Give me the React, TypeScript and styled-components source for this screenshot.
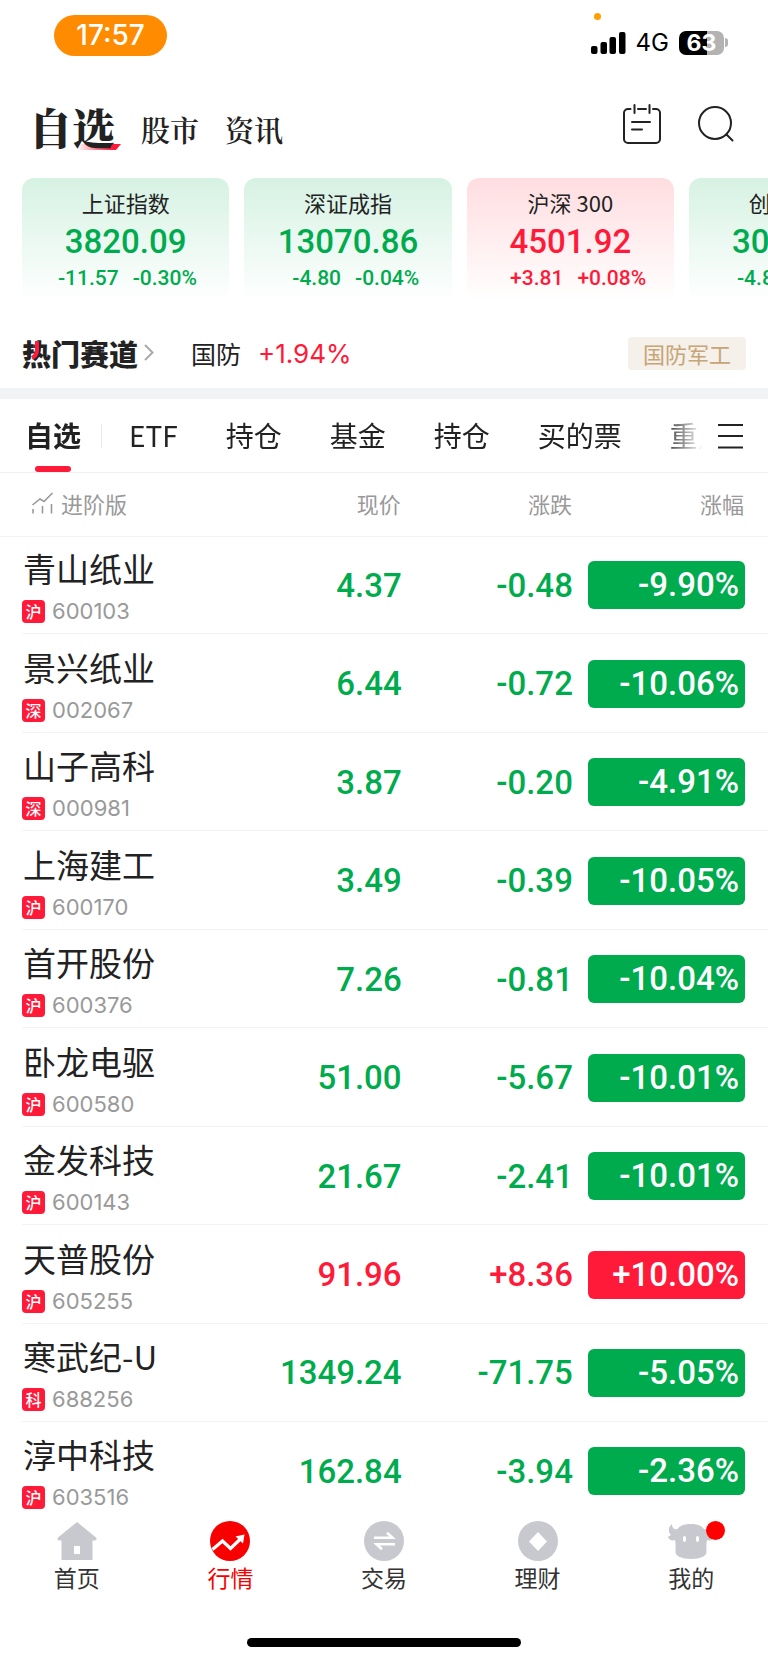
import React from "react";
import styled, { createGlobalStyle, css } from "styled-components";

const RED = "#ff1a39";
const GREEN = "#00ab4e";
const INK = "#222222";
const GREY = "#999999";
const CJK = `"Noto Sans CJK SC", sans-serif`;
const NUM = `Roboto, "Noto Sans CJK SC", sans-serif`;
const UI = `Inter, "Noto Sans CJK SC", sans-serif`;

const GlobalStyle = createGlobalStyle`
  *, *::before, *::after { box-sizing: border-box; }
  body { margin: 0; background: #fff; color: ${INK}; font-family: ${CJK}; }
  button { margin: 0; padding: 0; border: 0; background: none; color: inherit; font: inherit; cursor: pointer; }
  a { color: inherit; text-decoration: none; }
  svg { display: block; flex: none; }
  h1, h2, p { margin: 0; }
`;

type Tone = "up" | "down";
const toneColor = (t: Tone) => (t === "up" ? RED : GREEN);

const Page = styled.div`
  display: flex;
  flex-direction: column;
  width: 100%;
  min-height: 100vh;
  overflow: hidden;
`;

/* ---------- status bar ---------- */

const StatusBar = styled.div`
  display: flex;
  align-items: center;
  justify-content: space-between;
  padding: 15px 40px 0 54px;
  font-family: ${UI};
`;

const TimePill = styled.time`
  width: 113px;
  border-radius: 21px;
  background: #ff8c00;
  color: #fff;
  font-size: 28px;
  font-weight: 500;
  line-height: 41px;
  text-align: center;
`;

const StatusRight = styled.div`
  position: relative;
  display: flex;
  align-items: center;
  gap: 10px;
  padding-top: 14px;
  line-height: 24px;
`;

const PrivacyDot = styled.span`
  position: absolute;
  top: -4px;
  left: 3px;
  width: 7px;
  height: 7px;
  border-radius: 50%;
  background: #ffa000;
`;

const Network = styled.span`
  color: #000;
  font-size: 24px;
`;

const Battery = styled.span`
  display: flex;
  align-items: center;
  gap: 1px;
`;

const BatteryCell = styled.span`
  width: 45px;
  height: 24px;
  border-radius: 7px;
  background: linear-gradient(90deg, #000 63%, #b3b3b3 63%);
  color: #fff;
  font-size: 23px;
  font-weight: 700;
  text-align: center;
`;

const BatteryNub = styled.span`
  width: 3px;
  height: 9px;
  border-radius: 0 3px 3px 0;
  background: #b3b3b3;
`;

/* ---------- page header ---------- */

const Header = styled.header`
  display: flex;
  align-items: center;
  justify-content: space-between;
  height: 122px;
  padding: 26px 34px 12px 29px;
`;

const Sections = styled.nav`
  display: flex;
  align-items: flex-end;
  gap: 26px;
  margin-top: 6px;
  font-family: "Noto Serif CJK SC", "Noto Serif SC", "Noto Sans CJK SC", serif;
`;

const SectionLink = styled.a<{ $active?: boolean }>`
  position: relative;
  font-size: 29px;
  font-weight: 600;
  line-height: 42px;
  ${(p) =>
    p.$active &&
    css`
      font-size: 43px;
      font-weight: 900;
      line-height: 48px;
    `}
`;

const Swoosh = styled.svg`
  position: absolute;
  right: -6px;
  bottom: 1px;
  z-index: -1;
`;

const HeaderActions = styled.div`
  display: flex;
  align-items: center;
  gap: 37px;
`;

/* ---------- index cards ---------- */

const Cards = styled.section`
  display: flex;
  gap: 15px;
  padding-left: 22px;
  overflow: hidden;
`;

const Card = styled.article<{ $tone: Tone }>`
  flex: 0 0 27vw;
  height: 124px;
  padding-top: 10px;
  border-radius: 12px;
  background: linear-gradient(
    180deg,
    ${(p) => (p.$tone === "up" ? "#ffdde0" : "#d6f2e3")} 0%,
    #ffffff 100%
  );
  color: ${(p) => toneColor(p.$tone)};
  font-family: ${NUM};
  text-align: center;
`;

const CardTitle = styled.h2`
  color: ${INK};
  font-family: ${CJK};
  font-size: 22px;
  font-weight: 400;
  line-height: 28px;
`;

const CardValue = styled.p`
  margin-top: 5px;
  font-size: 33px;
  font-weight: 500;
  line-height: 42px;
`;

const CardChange = styled.p`
  display: grid;
  grid-template-columns: 1fr 1fr;
  gap: 14px;
  font-size: 21px;
  font-weight: 500;
  line-height: 30px;
  text-align: left;

  span:first-child { text-align: right; }
`;

/* ---------- hot sector strip ---------- */

const HotStrip = styled.section`
  display: flex;
  align-items: center;
  height: 86px;
  padding: 17px 22px 0;
`;

const HotTitle = styled.a`
  position: relative;
  display: flex;
  align-items: center;
  gap: 6px;
  padding-bottom: 2px;
  font-size: 29px;
  font-weight: 900;
  line-height: 34px;
`;

const HotStroke = styled.svg`
  position: absolute;
  top: 4px;
  left: 8px;
`;

const HotName = styled.span`
  margin-left: 37px;
  padding-bottom: 2px;
  font-size: 25px;
  line-height: 34px;
`;

const HotChange = styled.span`
  margin-left: 17px;
  color: ${RED};
  font-family: ${UI};
  font-size: 26px;
`;

const SectorTag = styled.button`
  && {
    margin-left: auto;
    padding: 0 15px;
    border-radius: 4px;
    background: #f5f0e9;
    color: #c6a576;
    font-size: 22px;
    line-height: 33px;
  }
`;

const Band = styled.div`
  height: 11px;
  background: #f2f3f5;
`;

/* ---------- group tabs ---------- */

const GroupBar = styled.div`
  display: flex;
  align-items: center;
  height: 74px;
  padding: 0 24px 0 25px;
  border-bottom: 1px solid #eeeff0;
`;

const GroupTabs = styled.nav`
  display: flex;
  flex: 1;
  gap: 48px;
  min-width: 0;
  overflow: hidden;
  mask-image: linear-gradient(90deg, #000 94%, transparent 100%);
`;

const GroupTab = styled.button<{ $active?: boolean }>`
  && {
    position: relative;
    flex: none;
    font-size: 28px;
    font-weight: ${(p) => (p.$active ? 700 : 400)};
    line-height: 73px;
    white-space: nowrap;
  }
  ${(p) =>
    p.$active &&
    css`
      &::before {
        content: "";
        position: absolute;
        right: -21px;
        top: 25px;
        width: 1px;
        height: 24px;
        background: #e8e8e8;
      }
      &::after {
        content: "";
        position: absolute;
        left: 10px;
        bottom: 0;
        width: 36px;
        height: 6px;
        border-radius: 3px;
        background: ${RED};
      }
    `}
`;

const MenuButton = styled.button`
  && { margin-left: 15px; }
`;

/* ---------- watch list ---------- */

const List = styled.table`
  width: 100%;
  height: 63vh;
  table-layout: fixed;
  border-collapse: collapse;
`;

const HeadCell = styled.th<{ $w: string }>`
  width: ${(p) => p.$w};
  height: 63px;
  padding: 0 1px 3px 0;
  border-bottom: 1px solid #f3f3f4;
  color: ${GREY};
  font-size: 22px;
  font-weight: 400;
  text-align: right;

  &:first-child { padding-left: 31px; text-align: left; }
  &:last-child { padding-right: 24px; }
`;

const Advanced = styled.button`
  && { display: flex; align-items: center; gap: 7px; }
`;

const Row = styled.tr`
  height: 98px;
  background: linear-gradient(#f3f3f4, #f3f3f4) 22px 100% / 100% 1px no-repeat;
  &:last-child { background: none; }
`;

const NameCell = styled.td`
  padding: 0 0 0 22px;
  white-space: nowrap;
`;

const StockName = styled.div`
  padding-left: 1px;
  font-size: 33px;
  line-height: 44px;
`;

const StockCode = styled.div`
  display: flex;
  align-items: center;
  gap: 7px;
  margin-top: 10px;
  padding-bottom: 1px;
  color: ${GREY};
  font-family: ${UI};
  font-size: 22px;
  line-height: 23px;
`;

const Market = styled.span`
  width: 23px;
  border-radius: 4px;
  background: ${RED};
  color: #fff;
  font-family: ${CJK};
  font-size: 16px;
  font-weight: 500;
  line-height: 23px;
  text-align: center;
`;

const NumCell = styled.td<{ $tone: Tone }>`
  padding: 0;
  color: ${(p) => toneColor(p.$tone)};
  font-family: ${NUM};
  font-size: 33px;
  font-weight: 500;
  text-align: right;

  &:last-child { padding: 0 23px 0 15px; }
`;

const Pct = styled.div<{ $tone: Tone }>`
  padding-right: 6px;
  border-radius: 6px;
  background: ${(p) => toneColor(p.$tone)};
  color: #fff;
  line-height: 48px;
`;

/* ---------- bottom navigation ---------- */

const TabBar = styled.nav`
  display: grid;
  grid-template-columns: repeat(5, 1fr);
  margin-top: auto;
`;

const TabItem = styled.a<{ $active?: boolean }>`
  position: relative;
  display: flex;
  flex-direction: column;
  align-items: center;
  color: ${(p) => (p.$active ? "#f80000" : "#333333")};
  font-size: 23px;
  line-height: 33px;
`;

const Unread = styled.span`
  position: absolute;
  top: 0;
  left: calc(50% + 15px);
  width: 19px;
  height: 19px;
  border-radius: 50%;
  background: #ff0000;
`;

const HomeIndicator = styled.div`
  width: 274px;
  height: 9px;
  margin: 44px auto 16px;
  border-radius: 5px;
  background: #000;
`;

/* ---------- icons ---------- */

const Signal = () => (
  <svg width="35" height="22" viewBox="0 0 35 22" aria-hidden="true">
    <rect x="0" y="14" width="6.5" height="8" rx="2" />
    <rect x="9.5" y="10" width="6.5" height="12" rx="2" />
    <rect x="18.5" y="5" width="6.5" height="17" rx="2" />
    <rect x="28" y="0" width="6.5" height="22" rx="2" />
  </svg>
);

const NotesIcon = () => (
  <svg width="38" height="40" viewBox="0 0 38 40" fill="none" stroke="#222" strokeWidth="2" strokeLinecap="round">
    <path d="M7.5 5H5a4 4 0 0 0-4 4v26a4 4 0 0 0 4 4h28a4 4 0 0 0 4-4V9a4 4 0 0 0-4-4h-3M15 5h8M11.500 1v8M26.500 1v8M9 18h18M9 25.500h10" />
  </svg>
);

const SearchIcon = () => (
  <svg width="36" height="36" viewBox="0 0 36 36" fill="none" stroke="#222" strokeWidth="2" strokeLinecap="round">
    <circle cx="17" cy="17" r="16" />
    <path d="M28.500 28.500l6 6" />
  </svg>
);

const MenuIcon = () => (
  <svg width="26" height="26" viewBox="0 0 26 26" stroke="#222" strokeWidth="2">
    <path d="M0 2h25M0 13h25M0 24.500h25" />
  </svg>
);

const TrendIcon = () => (
  <svg width="23" height="22" viewBox="0 0 23 22" fill="none" stroke={GREY} strokeWidth="1.600">
    <path d="M1.500 13l7.500-6 4 2.500L21.500 1M2 17v4.500M11.500 14v7.500M20.500 12v9.500" />
  </svg>
);

const Muted = "#c8c9cf";

const HomeIcon = () => (
  <svg width="40" height="40" viewBox="0 0 40 40" fill={Muted}>
    <path fillRule="evenodd" d="M20 1l19 15.500c1 1 .5 3-1 3h-2.500V39h-31V19.500H2c-1.500 0-2-2-1-3zM17 25v8h6v-8z" />
  </svg>
);

const MarketIcon = () => (
  <svg width="40" height="40" viewBox="0 0 40 40">
    <circle cx="20" cy="20" r="20" fill="#f80000" />
    <path d="M2.500 28.500L12.500 20l8 7.500L31 17.500" fill="none" stroke="#fff" strokeWidth="3.200" />
    <path d="M25.500 15.500L34.500 13.500l-1.500 9z" fill="#fff" />
  </svg>
);

const TradeIcon = () => (
  <svg width="40" height="40" viewBox="0 0 40 40" fill="none">
    <circle cx="20" cy="20" r="20" fill={Muted} />
    <path d="M10 16.800h18.500l-5.500-5M31 23.200H12.500l5.500 5" stroke="#fff" strokeWidth="2.600" />
  </svg>
);

const WealthIcon = () => (
  <svg width="40" height="40" viewBox="0 0 40 40">
    <circle cx="20" cy="20" r="20" fill={Muted} />
    <path d="M20 11l9 9.500-9 9.500-9-9.500z" fill="#fff" />
  </svg>
);

const BullIcon = () => (
  <svg width="46" height="40" viewBox="0 0 46 40" fill={Muted}>
    <path fillRule="evenodd" d="M4 3C0 6 0 11 3 14c-1 1-3 1-3 2 1 3 4 4 7 3 1 4 .500 8 .500 12 0 4 6 7 15.500 7s15.500-3 15.500-7c0-4-.500-8 .500-12 3 1 6 0 7-3 0-1-2-1-3-2 3-3 3-8-1-11 0 4-2 6-6 5C33 4 28 3 23 3S12 4 9.500 8C6 9 4 7 4 3zM15 18a1.500 3 0 1 0 3 0 1.500 3 0 1 0-3 0zM28 18a1.500 3 0 1 0 3 0 1.500 3 0 1 0-3 0z" />
  </svg>
);

/* ---------- data ---------- */

const indices: { name: string; value: string; diff: string; pct: string; tone: Tone }[] = [
  { name: "上证指数", value: "3820.09", diff: "-11.57", pct: "-0.30%", tone: "down" },
  { name: "深证成指", value: "13070.86", diff: "-4.80", pct: "-0.04%", tone: "down" },
  { name: "沪深 300", value: "4501.92", diff: "+3.81", pct: "+0.08%", tone: "up" },
  { name: "创业板指", value: "3091.00", diff: "-4.85", pct: "-0.16%", tone: "down" },
];

const groups = ["自选", "ETF", "持仓", "基金", "持仓", "买的票", "重点"];

const stocks: [string, string, string, string, string, string][] = [
  ["青山纸业", "沪", "600103", "4.37", "-0.48", "-9.90%"],
  ["景兴纸业", "深", "002067", "6.44", "-0.72", "-10.06%"],
  ["山子高科", "深", "000981", "3.87", "-0.20", "-4.91%"],
  ["上海建工", "沪", "600170", "3.49", "-0.39", "-10.05%"],
  ["首开股份", "沪", "600376", "7.26", "-0.81", "-10.04%"],
  ["卧龙电驱", "沪", "600580", "51.00", "-5.67", "-10.01%"],
  ["金发科技", "沪", "600143", "21.67", "-2.41", "-10.01%"],
  ["天普股份", "沪", "605255", "91.96", "+8.36", "+10.00%"],
  ["寒武纪-U", "科", "688256", "1349.24", "-71.75", "-5.05%"],
  ["淳中科技", "沪", "603516", "162.84", "-3.94", "-2.36%"],
];

const tabs = [
  { label: "首页", Icon: HomeIcon },
  { label: "行情", Icon: MarketIcon, active: true },
  { label: "交易", Icon: TradeIcon },
  { label: "理财", Icon: WealthIcon },
  { label: "我的", Icon: BullIcon, unread: true },
];

export default function App() {
  return (
    <Page>
      <GlobalStyle />
      <StatusBar>
        <TimePill>17:57</TimePill>
        <StatusRight>
          <PrivacyDot />
          <Signal />
          <Network>4G</Network>
          <Battery>
            <BatteryCell>63</BatteryCell>
            <BatteryNub />
          </Battery>
        </StatusRight>
      </StatusBar>

      <Header>
        <Sections>
          <SectionLink href="#watch" $active>
            自选
            <Swoosh width="44" height="6" viewBox="0 0 44 6" aria-hidden="true">
              <defs>
                <linearGradient id="swoosh">
                  <stop offset="0" stopColor={RED} stopOpacity="0" />
                  <stop offset="0.800" stopColor={RED} />
                </linearGradient>
              </defs>
              <path d="M0 6L4 0h40l-5 6z" fill="url(#swoosh)" />
            </Swoosh>
          </SectionLink>
          <SectionLink href="#stocks">股市</SectionLink>
          <SectionLink href="#news">资讯</SectionLink>
        </Sections>
        <HeaderActions>
          <button aria-label="笔记"><NotesIcon /></button>
          <button aria-label="搜索"><SearchIcon /></button>
        </HeaderActions>
      </Header>

      <Cards>
        {indices.map((i) => (
          <Card key={i.name} $tone={i.tone}>
            <CardTitle>{i.name}</CardTitle>
            <CardValue>{i.value}</CardValue>
            <CardChange>
              <span>{i.diff}</span>
              <span>{i.pct}</span>
            </CardChange>
          </Card>
        ))}
      </Cards>

      <HotStrip>
        <HotTitle href="#hot">
          热门赛道
          <HotStroke width="10" height="22" viewBox="0 0 10 22" fill="none" stroke={RED} strokeWidth="4" aria-hidden="true">
            <path d="M7 1v9c0 4-1 6-5 8" />
          </HotStroke>
          <svg width="10" height="17" viewBox="0 0 10 17" fill="none" stroke="#aaa" strokeWidth="2" aria-hidden="true">
            <path d="M1 1l7.500 7.500L1 16" />
          </svg>
        </HotTitle>
        <HotName>国防</HotName>
        <HotChange>+1.94%</HotChange>
        <SectorTag>国防军工</SectorTag>
      </HotStrip>
      <Band />

      <GroupBar>
        <GroupTabs>
          {groups.map((g, n) => (
            <GroupTab key={n} $active={n === 0}>{g}</GroupTab>
          ))}
        </GroupTabs>
        <MenuButton aria-label="分组管理"><MenuIcon /></MenuButton>
      </GroupBar>

      <List>
        <thead>
          <tr>
            <HeadCell $w="28%"><Advanced><TrendIcon />进阶版</Advanced></HeadCell>
            <HeadCell $w="24.300%">现价</HeadCell>
            <HeadCell $w="22.300%">涨跌</HeadCell>
            <HeadCell $w="25.400%">涨幅</HeadCell>
          </tr>
        </thead>
        <tbody>
          {stocks.map(([name, market, code, price, diff, pct]) => {
            const tone: Tone = pct.startsWith("+") ? "up" : "down";
            return (
              <Row key={code}>
                <NameCell>
                  <StockName>{name}</StockName>
                  <StockCode><Market>{market}</Market>{code}</StockCode>
                </NameCell>
                <NumCell $tone={tone}>{price}</NumCell>
                <NumCell $tone={tone}>{diff}</NumCell>
                <NumCell $tone={tone}><Pct $tone={tone}>{pct}</Pct></NumCell>
              </Row>
            );
          })}
        </tbody>
      </List>

      <TabBar>
        {tabs.map(({ label, Icon, active, unread }) => (
          <TabItem key={label} href={"#" + label} $active={active}>
            <Icon />
            {label}
            {unread && <Unread />}
          </TabItem>
        ))}
      </TabBar>
      <HomeIndicator />
    </Page>
  );
}
